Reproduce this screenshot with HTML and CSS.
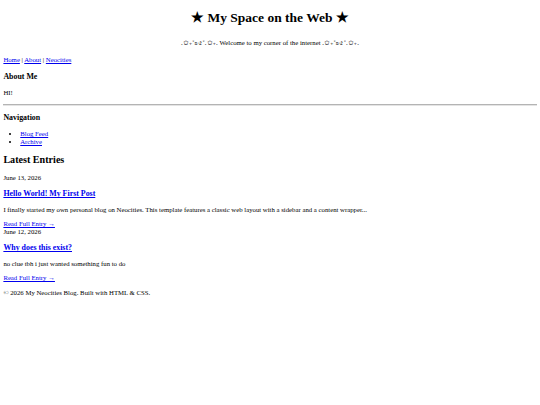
FILE: index.html
```html
<!DOCTYPE html>
<html>
<head>
<meta charset="utf-8">
<title>My Space on the Web</title>
<link rel="stylesheet" href="styles.css">
</head>
<body class="page">
<header class="site-header">
  <h1 class="site-title">★ My Space on the Web ★</h1>
  <p class="tagline">.✩₊˚ʚ৫˚.✩₊. Welcome to my corner of the internet .✩₊˚ʚ৫˚.✩₊.</p>
</header>
<nav class="top-nav"><a href="#">Home</a> | <a href="#">About</a> | <a href="#">Neocities</a></nav>
<aside class="sidebar">
  <h3 class="side-heading">About Me</h3>
  <p class="side-text">HI!</p>
  <hr class="divider">
  <h3 class="side-heading">Navigation</h3>
  <ul class="side-list">
    <li><a href="#">Blog Feed</a></li>
    <li><a href="#">Archive</a></li>
  </ul>
</aside>
<main class="content">
  <h2 class="content-title">Latest Entries</h2>
  <article class="entry">
    <p class="entry-date">June 13, 2026</p>
    <h3 class="entry-title"><a href="#">Hello World! My First Post</a></h3>
    <p class="entry-text">I finally started my own personal blog on Neocities. This template features a classic web layout with a sidebar and a content wrapper...</p>
    <a class="entry-more" href="#">Read Full Entry →</a>
  </article>
  <article class="entry">
    <div class="entry-date-tight">June 12, 2026</div>
    <h3 class="entry-title"><a href="#">Why does this exist?</a></h3>
    <p class="entry-text">no clue tbh i just wanted something fun to do</p>
    <a class="entry-more" href="#">Read Full Entry →</a>
  </article>
</main>
<footer class="site-footer"><p class="footer-text">© 2026 My Neocities Blog. Built with HTML &amp; CSS.</p></footer>
</body>
</html>
```
FILE: styles.css
```css
html { background: #fff; }
.page {
  margin: 3.375px;
  font-family: "Liberation Serif", "DejaVu Serif", serif;
  font-size: 6.75px;
  line-height: 1.15;
  color: #000;
}
a { color: #0000ee; }
.site-header { text-align: center; }
.site-title { font-size: 13.5px; margin: 7px 0 13px; }
.tagline { margin: 6.75px 0 9.75px; }
.top-nav { display: block; }
.side-heading { font-size: 7.9px; margin: 7.9px 0; }
.side-text { margin: 6.75px 0; }
.divider {
  margin: 3.375px 0;
  border: 0;
  border-top: 1px solid #b4b4b4;
  border-bottom: 1px solid #e4e4e4;
  height: 0;
}
.side-list { margin: 6.75px 0; padding-left: 16.875px; }
.content-title { font-size: 10.125px; margin: 8.4px 0; }
.entry-date { margin: 6.75px 0; }
.entry-date-tight { display: block; }
.entry-title { font-size: 7.9px; margin: 7.4px 0; }
.entry-text { margin: 6.75px 0; }
.entry-more { display: block; }
.site-footer { display: block; }
.footer-text { margin: 6.75px 0; }
```
